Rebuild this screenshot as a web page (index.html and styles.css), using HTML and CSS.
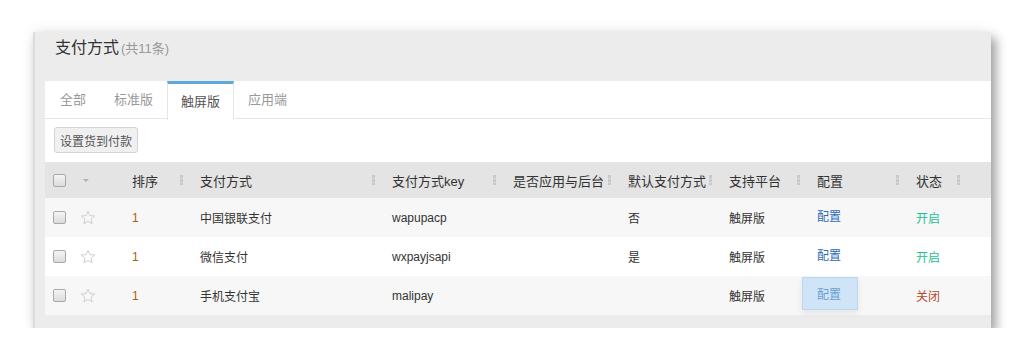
FILE: index.html
```html
<!DOCTYPE html>
<html lang="zh-CN">
<head>
    <meta charset="UTF-8">
    <title>支付方式</title>
    <link rel="stylesheet" href="styles.css">
</head>
<body>
    <div class="panel">
        <div class="panel-title">支付方式<small>(共11条)</small></div>

        <div class="panel-body">
            <ul class="tabs">
                <li>全部</li>
                <li>标准版</li>
                <li class="active">触屏版</li>
                <li>应用端</li>
            </ul>

            <div class="toolbar">
                <button class="btn">设置货到付款</button>
            </div>

            <table class="grid">
                <colgroup>
                    <col style="width:28px">
                    <col style="width:42px">
                    <col style="width:68px">
                    <col style="width:192px">
                    <col style="width:121px">
                    <col style="width:115px">
                    <col style="width:101px">
                    <col style="width:88px">
                    <col style="width:99px">
                    <col style="width:61px">
                    <col>
                </colgroup>
                <thead>
                    <tr>
                        <th class="c-check"><span class="checkbox"></span></th>
                        <th class="c-fav"><span class="caret"></span></th>
                        <th><div class="th">排序<i class="grip"></i></div></th>
                        <th><div class="th">支付方式<i class="grip"></i></div></th>
                        <th><div class="th">支付方式key<i class="grip"></i></div></th>
                        <th><div class="th">是否应用与后台<i class="grip"></i></div></th>
                        <th><div class="th">默认支付方式<i class="grip"></i></div></th>
                        <th><div class="th">支持平台<i class="grip"></i></div></th>
                        <th><div class="th">配置<i class="grip"></i></div></th>
                        <th><div class="th">状态<i class="grip"></i></div></th>
                        <th></th>
                    </tr>
                </thead>
                <tbody>
                    <tr>
                        <td class="c-check"><span class="checkbox"></span></td>
                        <td class="c-fav"><svg class="star" viewBox="0 0 16 16"><path d="M8 1.3l1.95 4.3 4.7.45-3.55 3.15 1.05 4.6L8 11.4l-4.15 2.4 1.05-4.6L1.35 6.05l4.7-.45z"/></svg></td>
                        <td class="sort">1</td>
                        <td>中国银联支付</td>
                        <td>wapupacp</td>
                        <td></td>
                        <td>否</td>
                        <td>触屏版</td>
                        <td class="c-cfg"><a class="cfg">配置</a></td>
                        <td class="on">开启</td>
                        <td></td>
                    </tr>
                    <tr>
                        <td class="c-check"><span class="checkbox"></span></td>
                        <td class="c-fav"><svg class="star" viewBox="0 0 16 16"><path d="M8 1.3l1.95 4.3 4.7.45-3.55 3.15 1.05 4.6L8 11.4l-4.15 2.4 1.05-4.6L1.35 6.05l4.7-.45z"/></svg></td>
                        <td class="sort">1</td>
                        <td>微信支付</td>
                        <td>wxpayjsapi</td>
                        <td></td>
                        <td>是</td>
                        <td>触屏版</td>
                        <td class="c-cfg"><a class="cfg">配置</a></td>
                        <td class="on">开启</td>
                        <td></td>
                    </tr>
                    <tr>
                        <td class="c-check"><span class="checkbox"></span></td>
                        <td class="c-fav"><svg class="star" viewBox="0 0 16 16"><path d="M8 1.3l1.95 4.3 4.7.45-3.55 3.15 1.05 4.6L8 11.4l-4.15 2.4 1.05-4.6L1.35 6.05l4.7-.45z"/></svg></td>
                        <td class="sort">1</td>
                        <td>手机支付宝</td>
                        <td>malipay</td>
                        <td></td>
                        <td></td>
                        <td>触屏版</td>
                        <td class="c-cfg"><a class="cfg hover">配置</a></td>
                        <td class="off">关闭</td>
                        <td></td>
                    </tr>
                </tbody>
            </table>
        </div>
    </div>
</body>
</html>
```

FILE: styles.css
```css
html, body {
    margin: 0;
    padding: 0;
    background: #fff;
    font-family: "Liberation Sans", "Noto Sans CJK SC", sans-serif;
    color: #333;
}

.panel {
    margin: 32px 0 0 33px;
    width: 946px;
    background: #ececec;
    border-left: 2px solid #dcdcdc;
    padding: 0 0 13px 10px;
    box-shadow: 5px 6px 10px rgba(0, 0, 0, 0.35), 0 0 14px rgba(0, 0, 0, 0.08);
}

.panel-title {
    height: 49px;
    line-height: 31px;
    padding: 0 0 0 10px;
    font-size: 16px;
    color: #333;
}

.panel-title small {
    font-size: 13px;
    color: #999;
    margin-left: 2px;
}

.panel-body {
    background: #fff;
}

.tabs {
    list-style: none;
    margin: 0;
    padding: 0 0 0 1px;
    display: flex;
    height: 37px;
    border-bottom: 1px solid #e6e6e6;
}

.tabs li {
    padding: 0 14px;
    line-height: 37px;
    font-size: 13px;
    color: #999;
}

.tabs li.active {
    color: #555;
    border-top: 3px solid #5ba7de;
    border-left: 1px solid #e6e6e6;
    border-right: 1px solid #e6e6e6;
    line-height: 35px;
    height: 35px;
    background: #fff;
    margin-bottom: -1px;
    padding: 0 13px 1px;
}

.toolbar {
    padding: 8px 9px 9px;
}

.btn {
    font-family: inherit;
    font-size: 12px;
    color: #555;
    background: #f0f0f0;
    border: 1px solid #d4d4d4;
    border-radius: 3px;
    height: 26px;
    padding: 0 5px;
    display: block;
}

.grid {
    width: 946px;
    table-layout: fixed;
    border-collapse: collapse;
}

.grid th {
    background: #e4e4e4;
    height: 36px;
    padding: 0 0 0 17px;
    font-size: 13px;
    font-weight: normal;
    text-align: left;
    color: #333;
}

.grid td {
    height: 39px;
    padding: 0 0 0 17px;
    font-size: 12px;
    color: #333;
    white-space: nowrap;
}

.grid tbody tr:nth-child(odd) td {
    background: #f7f7f7;
}

.grid .c-check {
    padding-left: 8px;
}

.grid .c-fav {
    padding-left: 7px;
}

.th {
    display: flex;
    align-items: center;
    justify-content: space-between;
    white-space: nowrap;
}

.grip {
    width: 3px;
    height: 10px;
    flex: none;
    background: repeating-linear-gradient(#c9c9c9 0 3px, #d9d9d9 3px 4px);
}

.checkbox {
    display: block;
    width: 11px;
    height: 11px;
    border: 1px solid #a9a9a9;
    border-radius: 2px;
    background: linear-gradient(#f4f4f4, #dcdcdc);
}

.caret {
    display: block;
    margin-left: 3px;
    width: 0;
    height: 0;
    border-left: 3px solid transparent;
    border-right: 3px solid transparent;
    border-top: 3px solid #b0b0b0;
}

.star {
    display: block;
    width: 16px;
    height: 16px;
    fill: none;
    stroke: #cfcfcf;
    stroke-width: 1;
}

.grid td.sort {
    color: #a85f0c;
}

.grid td.c-cfg {
    padding-left: 2px;
    vertical-align: top;
}

.cfg {
    display: inline-block;
    margin-top: 1px;
    padding: 10px 16px 6px 14px;
    line-height: 15px;
    border: 1px solid transparent;
    color: #2d6cb6;
}

.cfg.hover {
    background: #cfe5f7;
    border-color: #bcd8ef;
    color: #6b9fd0;
    box-shadow: 0 3px 6px rgba(0, 0, 0, 0.08);
}

.grid td.on {
    color: #1dbf95;
}

.grid td.off {
    color: #b9472d;
}
```
